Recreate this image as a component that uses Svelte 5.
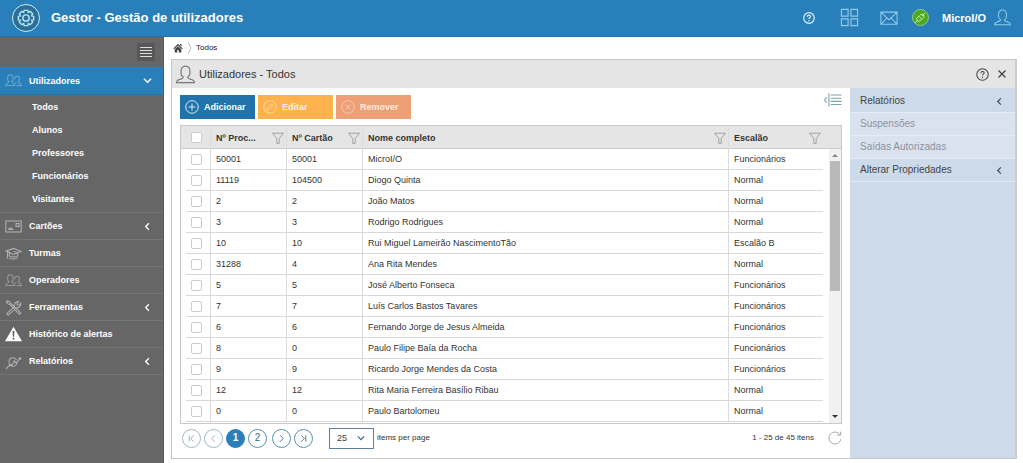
<script>
  const subItems = ['Todos', 'Alunos', 'Professores', 'Funcionários', 'Visitantes'];
  const menu = [
    { label: 'Cartões', icon: 'card', more: true },
    { label: 'Turmas', icon: 'cap', more: false },
    { label: 'Operadores', icon: 'users', more: false },
    { label: 'Ferramentas', icon: 'wrench', more: true },
    { label: 'Histórico de alertas', icon: 'alert', more: false },
    { label: 'Relatórios', icon: 'chart', more: true }
  ];
  const columns = ['Nº Proc...', 'Nº Cartão', 'Nome completo', 'Escalão'];
  const rows = [
    ['50001', '50001', 'MicroI/O', 'Funcionários'],
    ['11119', '104500', 'Diogo Quinta', 'Normal'],
    ['2', '2', 'João Matos', 'Normal'],
    ['3', '3', 'Rodrigo Rodrigues', 'Normal'],
    ['10', '10', 'Rui Miguel Lameirão NascimentoTão', 'Escalão B'],
    ['31288', '4', 'Ana Rita Mendes', 'Normal'],
    ['5', '5', 'José Alberto Fonseca', 'Funcionários'],
    ['7', '7', 'Luís Carlos Bastos Tavares', 'Funcionários'],
    ['6', '6', 'Fernando Jorge de Jesus Almeida', 'Funcionários'],
    ['8', '0', 'Paulo Filipe Baía da Rocha', 'Funcionários'],
    ['9', '9', 'Ricardo Jorge Mendes da Costa', 'Funcionários'],
    ['12', '12', 'Rita Maria Ferreira Basílio Ribau', 'Normal'],
    ['0', '0', 'Paulo Bartolomeu', 'Normal']
  ];
  const panelItems = [
    { label: 'Relatórios', group: true },
    { label: 'Suspensões', group: false },
    { label: 'Saídas Autorizadas', group: false },
    { label: 'Alterar Propriedades', group: true }
  ];
</script>

{#snippet icon(name, size)}
  <svg class="icon i-{name}" width={size} height={size} viewBox="0 0 20 20" aria-hidden="true">
    {#if name === 'user'}
      <path d="M5.200 7.500C5.200 3.500 7 1.200 10 1.200s4.800 2.300 4.800 6.300c0 2.400-1 4.300-2.600 5.300.3 1.700 2 1.900 4.200 2.500 2 .6 3 1.300 3 3.200H.6c0-1.900 1-2.600 3-3.200 2.200-.6 3.900-.8 4.200-2.500-1.600-1-2.600-2.900-2.600-5.300z" />
    {:else if name === 'users'}
      <path d="M3 7.500c0-2.800 1.200-4.200 3.300-4.200s3.300 1.400 3.300 4.200c0 2-.8 3.300-1.700 4 0 1.500 3.200 1.200 3.700 4.500H.8c.4-3.300 4-3 4-4.500C3.800 10.800 3 9.500 3 7.500z" />
      <path d="M11.500 8.500c0-2.500 1.200-3.500 2.800-3.500s2.700 1 2.700 3.500c0 1.700-.6 2.800-1.400 3.400 0 1.200 3.200 1 3.700 4.100h-5.500M13 12c.2.800-.5 1-1 1.200" />
    {:else if name === 'card'}
      <path d="M1 3.500h18v13H1zM4 13.500h6M4 12h5M13 6.500h3.500V10H13z" />
    {:else if name === 'cap'}
      <path d="M1.500 7 10 4l8.500 3.500L10 11zM5 9v3.500c1 2 9 2 10 0V9M3 8v6l-1 2M10 7.500l5 1.500M4.500 15c2 2 8.500 2 10.500 0" />
    {:else if name === 'wrench'}
      <path d="M3 2 1.500 3.500 4 6l1.500.2L15 16l2 2 1.500-1.500-2-2.200L6.300 5 6 3.500zM2 17.500l9-8.500c-.8-3.500 1.500-6.500 5-6l-2 2.300.5 1.800 1.800.3L18.500 5c.5 3.500-2 5.500-5 5.200L4 19z" />
    {:else if name === 'alert'}
      <path class="solid" d="M10 1 20 18H0z" />
      <path class="cut" d="M8.800 6h2.400l-.5 6.500H9.300zM8.900 13.800h2.200V16H8.900z" />
    {:else if name === 'chart'}
      <path d="m1 19 5-5.500 2 1L11 9l2 3 5.500-6.500M18.500 5.500 16 6m2.500-.5.200 2.500M14 10.500c.3 3-1.800 5-4.500 5-3 0-4.800-2.200-4.800-5 0-3 2-5 4.800-5 2 0 3.500 1 4.200 2.700" />
    {:else if name === 'gear'}
      <path d="M8 1.500h4l.6 2.300 2.100-1.100 2.700 2.700-1.200 2.100 2.300.6v4l-2.300.5 1.200 2.100-2.700 2.700-2.100-1.100L12 18.500H8l-.6-2.200-2.100 1.100-2.700-2.700 1.200-2.100-2.300-.5v-4l2.300-.6-1.200-2.100 2.700-2.700 2.100 1.100z" />
      <circle cx="10" cy="10" r="3.500" />
    {:else if name === 'help'}
      <circle cx="10" cy="10" r="8.800" />
      <path d="M7.300 8c0-3.500 5.200-3.500 5.200-.5 0 1.800-2.500 2-2.500 4M10 13.500v2" />
    {:else if name === 'apps'}
      <path d="M1.500 1.500h7v7h-7zM11.500 1.500h7v7h-7zM1.500 11.500h7v7h-7zM11.500 11.500h7v7h-7z" />
    {:else if name === 'mail'}
      <path d="M1 3.500h18v13.500H1zM1 3.500l9 8.500 9-8.500M1 17l6.500-7M19 17l-6.500-7" />
    {:else if name === 'plug'}
      <path d="m2 18 3.500-3.500M18 2l-4.500 4.500M5.500 14.500c-1.500-2-1-4 .5-5.500l2-2 5 5-2 2c-1.500 1.500-3.500 2-5.500.5zM9 6.500l1.500-1.500c1.500-1.500 3.500-1.500 5 0s1.500 3.500 0 5L14 11.500" />
    {:else if name === 'home'}
      <path class="solid" d="M10 1.500 19.500 11 18 12.500 10 5l-8 7.500L.5 11zM10 6.500l6.500 6V19h-5v-5h-3v5h-5v-6.500zM14 2h3v5l-3-3z" />
    {:else if name === 'plus'}
      <circle cx="10" cy="10" r="9" /><path d="M10 5v10M5 10h10" />
    {:else if name === 'pencil'}
      <circle cx="10" cy="10" r="9" /><path d="m5.500 14.500.7-3 6-6 2.300 2.300-6 6z" />
    {:else if name === 'cross'}
      <circle cx="10" cy="10" r="9" /><path d="m6.500 6.500 7 7m0-7-7 7" />
    {:else if name === 'close'}
      <path d="m3 3 14 14M17 3 3 17" />
    {:else if name === 'filter'}
      <path d="M1 2h18l-7 9v8H8v-8z" />
    {:else if name === 'panel'}
      <path d="M7.500 4.500h12M7.500 8h12M7.500 11.500h12M7.500 15h12M5.500 2.500v15M3 7 .5 10 3 13" />
    {:else if name === 'left'}
      <path d="m13 3-7 7 7 7" />
    {:else if name === 'right'}
      <path d="m7 3 7 7-7 7" />
    {:else if name === 'down'}
      <path d="m2 6 8 8 8-8" />
    {:else if name === 'first'}
      <path d="M5 3v14M15 3l-7 7 7 7" />
    {:else if name === 'last'}
      <path d="M15 3v14M5 3l7 7-7 7" />
    {:else if name === 'reload'}
      <path d="M18.500 11.500A8.600 8.600 0 1 1 17 5M18 1v5h-5" />
    {/if}
  </svg>
{/snippet}

<div class="app">
  <header class="topbar">
    <span class="logo">{@render icon('gear', 18)}</span>
    <h1>Gestor - Gestão de utilizadores</h1>
    <nav class="shortcuts" aria-label="Atalhos">
      <button class="help-link" aria-label="Ajuda">{@render icon('help', 12)}</button>
      <button class="apps-link" aria-label="Aplicações">{@render icon('apps', 19)}</button>
      <button class="mail-link" aria-label="Mensagens">{@render icon('mail', 18)}</button>
      <button class="status" aria-label="Ligação">{@render icon('plug', 12)}</button>
    </nav>
    <button class="account"><span>MicroI/O</span>{@render icon('user', 17)}</button>
  </header>

  <div class="body">
    <aside class="sidebar">
      <div class="fold">
        <button aria-label="Recolher menu"><i></i><i></i><i></i><i></i></button>
      </div>
      <nav aria-label="Menu principal">
        <a class="item active" href="#utilizadores">
          {@render icon('users', 17)}<span>Utilizadores</span>
          <b>{@render icon('down', 9)}</b>
        </a>
        <div class="sub">
          {#each subItems as label}
            <a href="#{label}">{label}</a>
          {/each}
        </div>
        {#each menu as entry}
          <a class="item" href="#{entry.icon}">
            {@render icon(entry.icon, 17)}<span>{entry.label}</span>
            {#if entry.more}<b>{@render icon('left', 9)}</b>{/if}
          </a>
        {/each}
      </nav>
    </aside>

    <main>
      <nav class="crumbs" aria-label="Localização">
        <a href="#inicio" aria-label="Início">{@render icon('home', 10)}</a>
        <svg width="5" height="14" viewBox="0 0 5 14" aria-hidden="true"><path d="m1 1 3 6-3 6" /></svg>
        <span>Todos</span>
      </nav>

      <section class="window">
        <header class="titlebar">
          {@render icon('user', 19)}
          <h2>Utilizadores - Todos</h2>
          <button aria-label="Ajuda">{@render icon('help', 13)}</button>
          <button aria-label="Fechar">{@render icon('close', 10)}</button>
        </header>

        <div class="content">
          <div class="work">
            <div class="actions">
              <button class="add">{@render icon('plus', 14)}Adicionar</button>
              <button class="edit">{@render icon('pencil', 14)}Editar</button>
              <button class="remove">{@render icon('cross', 14)}Remover</button>
              <button class="toggle" aria-label="Mostrar painel">{@render icon('panel', 18)}</button>
            </div>

            <div class="grid">
              <table>
                <colgroup>
                  <col class="c-check" /><col class="c-num" /><col class="c-num" /><col /><col class="c-tier" />
                </colgroup>
                <thead>
                  <tr>
                    <th><input type="checkbox" aria-label="Selecionar todos" /></th>
                    {#each columns as column}
                      <th><div>{column}{@render icon('filter', 12)}</div></th>
                    {/each}
                  </tr>
                </thead>
                <tbody>
                  {#each rows as row}
                    <tr>
                      <td><input type="checkbox" aria-label="Selecionar {row[2]}" /></td>
                      {#each row as cell}<td>{cell}</td>{/each}
                    </tr>
                  {/each}
                </tbody>
              </table>
              <div class="scroll" aria-hidden="true">
                <i class="up"></i><i class="thumb"></i><i class="dn"></i>
              </div>
            </div>

            <footer class="pager">
              <button class="off" aria-label="Primeira página">{@render icon('first', 9)}</button>
              <button class="off" aria-label="Página anterior">{@render icon('left', 9)}</button>
              <button class="current">1</button>
              <button>2</button>
              <button class="next" aria-label="Página seguinte">{@render icon('right', 9)}</button>
              <button aria-label="Última página">{@render icon('last', 9)}</button>
              <span class="select">
                <select id="page-size"><option>25</option><option>50</option></select>
                {@render icon('down', 8)}
              </span>
              <label for="page-size">items per page</label>
              <span class="count">1 - 25 de 45 itens</span>
              <a href="#atualizar" aria-label="Atualizar">{@render icon('reload', 14)}</a>
            </footer>
          </div>

          <aside class="side">
            {#each panelItems as entry}
              <button class:group={entry.group}>
                <span>{entry.label}</span>
                {#if entry.group}{@render icon('left', 9)}{/if}
              </button>
            {/each}
          </aside>
        </div>
      </section>
    </main>
  </div>
</div>

<style>
  :global(body) { margin: 0; }
  .app {
    min-height: 100vh;
    display: flex;
    flex-direction: column;
    font: 9px/14px "Liberation Sans", Arial, sans-serif;
    color: #333;
    background: #fff;
  }
  .app * { box-sizing: border-box; }
  h1, h2 { margin: 0; }
  button {
    margin: 0;
    padding: 0;
    border: 0;
    background: none;
    font: inherit;
    color: inherit;
    display: flex;
    align-items: center;
  }
  a { color: inherit; text-decoration: none; }
  .icon {
    display: block;
    flex: none;
    fill: none;
    stroke: currentColor;
    stroke-width: 1.2;
  }
  .icon .solid { fill: currentColor; stroke: none; }
  .icon .cut { fill: #666; stroke: none; }

  .topbar {
    height: 37px;
    flex: none;
    display: flex;
    align-items: center;
    padding: 0 12px 1px;
    background: #287fba;
    border-bottom: 1px solid #2373aa;
    color: #fff;
  }
  .logo {
    width: 28px;
    height: 28px;
    display: grid;
    place-items: center;
    border: 1px solid #c9ecf8;
    border-radius: 50%;
    background: #2b6f98;
    color: #b5e3f4;
  }
  .logo .icon { stroke-width: 1.6; }
  h1 { margin-left: 11px; font-size: 13px; font-weight: 700; }
  .shortcuts { display: flex; align-items: center; margin-left: auto; color: #93cbea; }
  .help-link { margin-right: 25px; color: #e4f3fb; }
  .help-link .icon { stroke-width: 2; }
  .apps-link { margin-right: 21px; }
  .mail-link { margin-right: 14px; }
  .status {
    width: 17px;
    height: 17px;
    justify-content: center;
    border-radius: 50%;
    border: 1px solid #8fc98a;
    background: #4ca81e;
    color: #d5f5c5;
  }
  .status .icon { stroke-width: 1.6; }
  .account { margin-left: 13px; gap: 8px; font-size: 11px; font-weight: 700; }
  .account .icon { color: #93cbea; }

  .body { flex: 1; display: flex; }
  .sidebar {
    width: 164px;
    flex: none;
    background: #666;
    border-right: 1px solid #5c5c5c;
    color: #fff;
    font-weight: 700;
  }
  .fold { height: 30px; display: flex; align-items: center; justify-content: flex-end; padding-right: 8px; }
  .fold button {
    width: 18px;
    height: 18px;
    flex-direction: column;
    justify-content: center;
    gap: 2px;
    background: #575757;
    border-radius: 2px;
  }
  .fold i { width: 12px; height: 1px; background: #ddd; }
  .item {
    height: 27px;
    display: flex;
    align-items: center;
    padding: 0 11px 0 5px;
    border-bottom: 1px solid #757575;
  }
  .item .icon { color: #b4b4b4; }
  .item .i-users { color: #999; }
  .item .i-alert { color: #fff; }
  .item span { margin-left: 7px; }
  .item b { margin-left: auto; }
  .item b .icon { color: #fff; stroke-width: 3; }
  .item.active { height: 28px; background: #287fba; border-bottom-color: #2373aa; }
  .item.active > .icon { color: #6fa9cf; }
  .sub { padding: 1px 0; border-bottom: 1px solid #757575; }
  .sub a { display: block; padding-left: 32px; line-height: 23px; }

  main { flex: 1; min-width: 0; display: flex; flex-direction: column; padding: 0 6px 4px 7px; }
  .crumbs { height: 22px; display: flex; align-items: center; gap: 4px; padding: 0 2px 1px; font-size: 8px; color: #222; }
  .crumbs svg:not(.icon) { fill: none; stroke: #bbb; }
  .crumbs a { color: #444; }
  .window {
    flex: 1;
    display: flex;
    flex-direction: column;
    border: 1px solid #c6c6c6;
    border-right: 2px solid #ccc;
  }
  .titlebar { height: 28px; display: flex; align-items: center; padding: 0 8px 0 4px; background: #e5e5e5; }
  .titlebar > .icon { color: #777; }
  h2 { margin: 0 auto 0 4px; font-size: 11px; font-weight: 400; }
  .titlebar button { margin-left: 8px; color: #444; }
  .titlebar button .i-help { stroke-width: 1.6; }
  .titlebar button .i-close { stroke-width: 2.6; }
  .content { flex: 1; display: flex; }
  .work { flex: 1; min-width: 0; display: flex; flex-direction: column; padding: 7px 8px 10px; }

  .actions { display: flex; gap: 3px; margin-bottom: 6px; }
  .actions button { width: 76px; height: 24px; padding-left: 5px; gap: 5px; color: #fff; font-weight: 700; }
  .actions .add, .actions .edit, .actions .remove { width: 75px; }
  .actions .add { background: #2074ab; }
  .actions .edit { background: #fdb24e; color: #fff3dc; }
  .actions .remove { background: #ee9f76; color: #ffeadf; }
  .actions .edit .icon, .actions .remove .icon { opacity: 0.7; }
  .actions .toggle { width: 18px; height: 18px; padding: 0; margin: -4px 0 0 auto; color: #7aa5b0; }

  .grid {
    flex: 1;
    display: flex;
    padding-left: 5px;
    border: 1px solid #c9c9c9;
    background: linear-gradient(#e5e5e5 22px, #ccc 22px, #ccc 23px, #fff 23px);
  }
  table { flex: 1; width: 0; table-layout: fixed; border-collapse: separate; border-spacing: 0; align-self: flex-start; }
  .c-check { width: 24px; }
  .c-num { width: 76px; }
  .c-tier { width: 95px; }
  th, td { padding: 0 5px; text-align: left; white-space: nowrap; overflow: hidden; }
  th:first-child, td:first-child { padding: 0; }
  th + th, td + td { border-left: 1px solid #dcdcdc; }
  th { height: 23px; padding-right: 2px; font-weight: 700; color: #333; }
  th div { display: flex; align-items: center; justify-content: space-between; }
  th .icon { color: #888; }
  td { height: 21px; border-bottom: 1px solid #d8d8d8; }
  input {
    appearance: none;
    display: block;
    width: 11px;
    height: 11px;
    margin: 0 5px;
    border: 1px solid #ccc;
    border-radius: 2px;
    background: #fff;
  }
  .scroll {
    width: 12px;
    margin: 23px 0 0 6px;
    display: flex;
    flex-direction: column;
    align-items: center;
    background: #f1f1f1;
  }
  .thumb { width: 10px; height: 130px; margin-top: 4px; background: #b9b9b9; }
  .up, .dn { border: 3px solid transparent; }
  .up { margin-top: 2px; border-bottom-color: #888; }
  .dn { margin: auto 0 2px; border-top-color: #333; }

  .pager { display: flex; align-items: center; height: 20px; margin-top: 4px; padding-left: 2px; gap: 3px; font-size: 8px; }
  .pager button {
    width: 19px;
    height: 19px;
    justify-content: center;
    border: 1px solid #5b8fae;
    border-radius: 50%;
    color: #2b6f98;
    font-size: 10px;
  }
  .pager .off { color: #8fa9b8; border-color: #9db8c8; }
  .pager .current { background: #287fba; border-color: #287fba; color: #fff; font-weight: 700; }
  .pager button .icon { stroke-width: 2; }
  .pager .next { margin-left: 2px; }
  .select { display: grid; align-items: center; width: 45px; margin-left: 13px; }
  .select select {
    grid-area: 1 / 1;
    appearance: none;
    width: 100%;
    height: 21px;
    padding: 0 7px;
    border: 1px solid #5f7f9b;
    border-radius: 0;
    background: #fff;
    font: inherit;
    font-size: 9px;
    color: #3c3c3c;
  }
  .select .icon { grid-area: 1 / 1; justify-self: end; margin-right: 9px; color: #2b6f98; stroke-width: 3; pointer-events: none; }
  .count { margin: 0 11px 0 auto; }
  .pager a { color: #999; }

  .side { width: 165px; flex: none; padding-top: 2px; background: #cddaea; }
  .side button {
    width: 100%;
    height: 23px;
    padding: 0 11px 0 10px;
    justify-content: space-between;
    background: #dae2f0;
    border-bottom: 1px solid #e6ecf5;
    color: #8d929b;
    font-size: 10px;
  }
  .side .group { background: #cddaea; color: #444; }
  .side .icon { stroke-width: 2.6; }
</style>
